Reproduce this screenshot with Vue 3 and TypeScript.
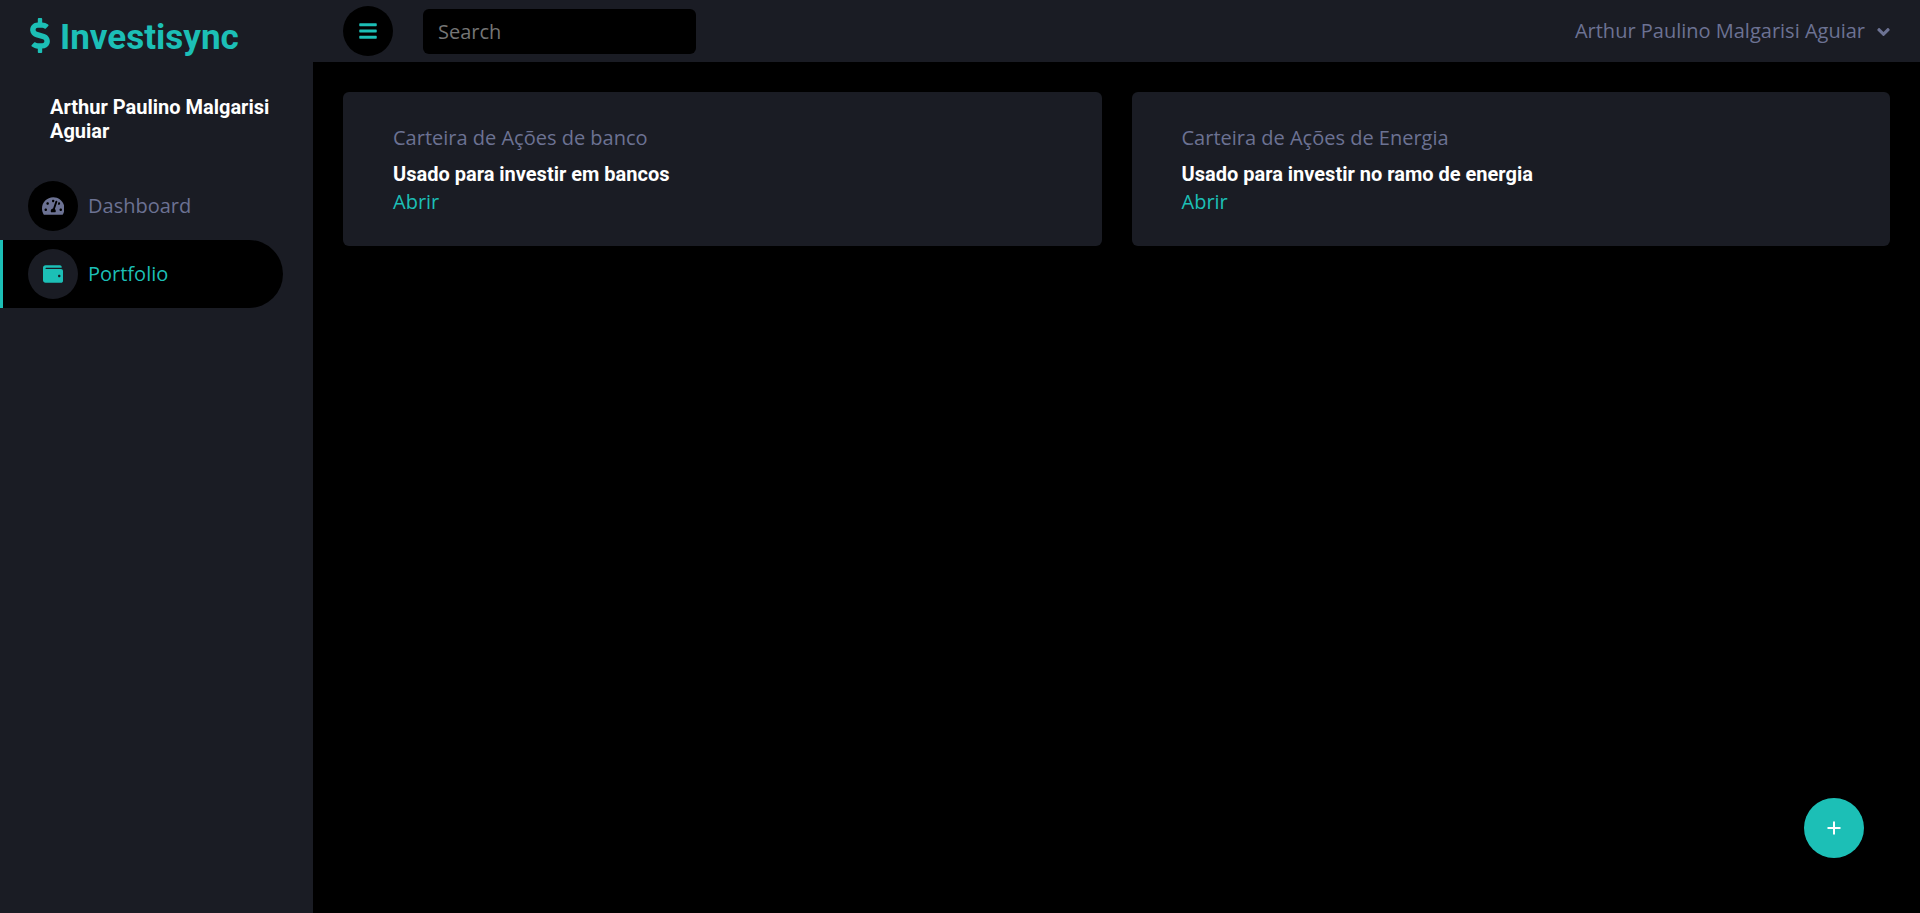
<script setup lang="ts">
import { ref } from 'vue'

interface Portfolio {
  id: number
  name: string
  description: string
}

interface NavItem {
  label: string
  viewBox: string
  icon: string
  active: boolean
}

const user = 'Arthur Paulino Malgarisi Aguiar'
const search = ref('')
const sidebarOpen = ref(true)

const navItems: NavItem[] = [
  {
    label: 'Dashboard',
    viewBox: '0 0 576 512',
    icon: 'M288 32C128.94 32 0 160.94 0 320c0 52.8 14.25 102.26 39.06 144.8 5.61 9.62 16.3 15.2 27.44 15.2h443c11.14 0 21.83-5.58 27.44-15.2C561.75 422.26 576 372.8 576 320c0-159.06-128.94-288-288-288zm0 64c14.71 0 26.58 10.13 30.32 23.65-1.11 2.26-2.64 4.23-3.45 6.67l-9.22 27.67c-5.13 3.49-10.97 6.01-17.64 6.01-17.67 0-32-14.33-32-32S270.33 96 288 96zM96 384c-17.67 0-32-14.33-32-32s14.33-32 32-32 32 14.33 32 32-14.33 32-32 32zm48-160c-17.67 0-32-14.33-32-32s14.33-32 32-32 32 14.33 32 32-14.33 32-32 32zm246.77-72.41l-61.33 184C343.13 347.33 352 364.54 352 384c0 11.72-3.38 22.55-8.88 32H232.88c-5.5-9.45-8.88-20.28-8.88-32 0-33.94 26.5-61.43 59.9-63.59l61.34-184.01c4.17-12.56 17.73-19.45 30.36-15.17 12.57 4.19 19.35 17.79 15.17 30.36zm14.66 57.2l15.52-46.55c3.47-1.29 7.13-2.23 11.05-2.23 17.67 0 32 14.33 32 32s-14.33 32-32 32c-11.38-.01-20.89-6.28-26.57-15.22zM480 384c-17.67 0-32-14.33-32-32s14.33-32 32-32 32 14.33 32 32-14.33 32-32 32z',
    active: false,
  },
  {
    label: 'Portfolio',
    viewBox: '0 0 512 512',
    icon: 'M461.2 128H80c-8.84 0-16-7.16-16-16s7.16-16 16-16h384c8.84 0 16-7.16 16-16 0-26.51-21.49-48-48-48H64C28.65 32 0 60.65 0 96v320c0 35.35 28.65 64 64 64h397.2c28.02 0 50.8-21.53 50.8-48V176c0-26.47-22.78-48-50.8-48zM416 336c-17.67 0-32-14.33-32-32s14.33-32 32-32 32 14.33 32 32-14.33 32-32 32z',
    active: true,
  },
]

const portfolios: Portfolio[] = [
  { id: 1, name: 'Carteira de Ações de banco', description: 'Usado para investir em bancos' },
  { id: 2, name: 'Carteira de Ações de Energia', description: 'Usado para investir no ramo de energia' },
]
</script>

<template>
  <div class="layout">
    <aside v-show="sidebarOpen" class="sidebar">
      <a href="#" class="brand">
        <svg class="brand-icon" viewBox="0 0 288 512" aria-hidden="true">
          <path d="M209.2 233.4l-108-31.6C88.7 198.2 80 186.5 80 173.5c0-16.3 13.2-29.5 29.5-29.5h66.300c12.200 0 24.200 3.700 34.200 10.500 6.100 4.100 14.300 3.100 19.500-2l34.800-34c7.100-6.900 6.100-18.400-1.800-24.500C238 74.800 207.400 64.100 176 64V16c0-8.800-7.200-16-16-16h-32c-8.800 0-16 7.200-16 16v48h-2.500C45.800 64-5.400 118.700.5 183.600c4.200 46.100 39.400 83.600 83.800 96.600l102.500 30c12.500 3.700 21.200 15.300 21.200 28.300 0 16.300-13.200 29.500-29.500 29.500h-66.300C100 368 88 364.300 78 357.500c-6.100-4.100-14.300-3.100-19.500 2l-34.800 34c-7.100 6.900-6.100 18.400 1.800 24.500 24.500 19.200 55.100 29.900 86.500 30v48c0 8.800 7.200 16 16 16h32c8.800 0 16-7.200 16-16v-48.200c46.600-.9 90.300-28.600 105.700-72.700 21.500-61.600-14.600-124.800-72.500-141.700z" />
        </svg>
        <span>Investisync</span>
      </a>
      <h6 class="sidebar-user">{{ user }}</h6>
      <nav>
        <a
          v-for="item in navItems"
          :key="item.label"
          href="#"
          class="nav-link"
          :class="{ active: item.active }"
          :aria-current="item.active ? 'page' : undefined"
        >
          <span class="nav-icon">
            <svg :viewBox="item.viewBox" aria-hidden="true"><path :d="item.icon" /></svg>
          </span>
          {{ item.label }}
        </a>
      </nav>
    </aside>

    <div class="content">
      <header class="topbar">
        <button type="button" class="toggler" aria-label="Menu" @click="sidebarOpen = !sidebarOpen">
          <svg viewBox="0 0 448 512" aria-hidden="true">
            <path d="M16 132h416c8.837 0 16-7.163 16-16V76c0-8.837-7.163-16-16-16H16C7.163 60 0 67.163 0 76v40c0 8.837 7.163 16 16 16zm0 160h416c8.837 0 16-7.163 16-16v-40c0-8.837-7.163-16-16-16H16c-8.837 0-16 7.163-16 16v40c0 8.837 7.163 16 16 16zm0 160h416c8.837 0 16-7.163 16-16v-40c0-8.837-7.163-16-16-16H16c-8.837 0-16 7.163-16 16v40c0 8.837 7.163 16 16 16z" />
          </svg>
        </button>
        <input v-model="search" class="search" type="search" placeholder="Search" aria-label="Search" />
        <button type="button" class="user-menu" aria-haspopup="true">
          {{ user }}
          <svg viewBox="0 0 320 512" aria-hidden="true">
            <path d="M143 352.3L7 216.3c-9.4-9.4-9.4-24.6 0-33.9l22.600-22.600c9.400-9.400 24.600-9.400 33.900 0l96.400 96.400 96.400-96.400c9.400-9.400 24.600-9.400 33.900 0l22.600 22.600c9.400 9.400 9.400 24.600 0 33.900l-136 136c-9.200 9.400-24.400 9.400-33.800 0z" />
          </svg>
        </button>
      </header>

      <main class="cards">
        <article v-for="portfolio in portfolios" :key="portfolio.id" class="card">
          <p class="card-name">{{ portfolio.name }}</p>
          <h6>{{ portfolio.description }}</h6>
          <a href="#" class="card-link">Abrir</a>
        </article>
      </main>
    </div>

    <button type="button" class="add" aria-label="Adicionar carteira">
      <svg viewBox="0 0 14 14" aria-hidden="true"><path d="M7 .5v13M.5 7h13" /></svg>
    </button>
  </div>
</template>

<style>
body {
  margin: 0;
  background: #000;
}
</style>

<style scoped>
.layout {
  --primary: #1cbfb6;
  --muted: #6c7293;
  --panel: #1a1c24;
  display: flex;
  min-height: 100vh;
  background: #000;
  color: var(--muted);
  font-family: 'Open Sans', sans-serif;
  font-size: 20px;
  line-height: 30px;
}

.layout * {
  box-sizing: border-box;
}

a {
  color: var(--primary);
  text-decoration: none;
}

button,
input {
  border: 0;
  font: inherit;
}

button {
  padding: 0;
  cursor: pointer;
}

svg {
  display: block;
  fill: currentColor;
}

h6 {
  margin: 0;
  color: #fff;
  font-family: Roboto, sans-serif;
  font-size: 20px;
  font-weight: 700;
  line-height: 24px;
}

.sidebar {
  flex: 0 0 313px;
  padding: 16px 30px 16px 0;
  background: var(--panel);
}

.brand {
  display: flex;
  align-items: center;
  gap: 10px;
  margin-left: 30px;
  font-family: Roboto, sans-serif;
  font-size: 35px;
  font-weight: 700;
  line-height: 43px;
}

.brand-icon {
  width: 20px;
  height: 35px;
  margin-bottom: 4px;
}

.sidebar-user {
  margin: 36px 0 29px;
  padding-left: 50px;
}

.nav-link {
  display: flex;
  align-items: center;
  gap: 10px;
  height: 68px;
  padding-left: 25px;
  border-left: 3px solid var(--panel);
  border-radius: 0 34px 34px 0;
  color: var(--muted);
}

.nav-icon {
  display: flex;
  align-items: center;
  justify-content: center;
  width: 50px;
  height: 50px;
  border-radius: 50%;
  background: #000;
}

.nav-icon svg {
  height: 20px;
}

.nav-link.active {
  border-color: var(--primary);
  background: #000;
  color: var(--primary);
}

.active .nav-icon {
  background: var(--panel);
}

.content {
  flex: 1;
  min-width: 0;
}

.topbar {
  display: flex;
  align-items: center;
  height: 62px;
  padding: 0 30px;
  background: var(--panel);
}

.toggler {
  display: flex;
  align-items: center;
  justify-content: center;
  width: 50px;
  height: 50px;
  border-radius: 50%;
  background: #000;
  color: var(--primary);
}

.toggler svg {
  width: 18px;
  height: 20px;
}

.search {
  width: 273px;
  height: 45px;
  margin-left: 30px;
  padding: 0 15px;
  border-radius: 6px;
  outline: 0;
  background: #000;
  color: var(--muted);
  appearance: none;
}

.search::placeholder {
  color: #757575;
  opacity: 1;
}

.user-menu {
  display: flex;
  align-items: center;
  gap: 12px;
  margin-left: auto;
  background: none;
  color: var(--muted);
}

.user-menu svg {
  width: 13px;
  height: 20px;
  margin-top: 2px;
}

.cards {
  display: grid;
  grid-template-columns: repeat(auto-fit, minmax(400px, 1fr));
  gap: 30px;
  padding: 30px;
}

.card {
  padding: 30px 50px 28px;
  border-radius: 6px;
  background: var(--panel);
}

.card-name {
  margin: 0 0 8px;
  line-height: 32px;
}

.card-link {
  display: block;
  width: fit-content;
  line-height: 32px;
}

.add {
  position: fixed;
  right: 56px;
  bottom: 55px;
  display: flex;
  align-items: center;
  justify-content: center;
  width: 60px;
  height: 60px;
  border-radius: 50%;
  background: var(--primary);
  color: #fff;
}

.add svg {
  width: 14px;
  height: 14px;
  fill: none;
  stroke: currentColor;
  stroke-width: 2;
}
</style>
